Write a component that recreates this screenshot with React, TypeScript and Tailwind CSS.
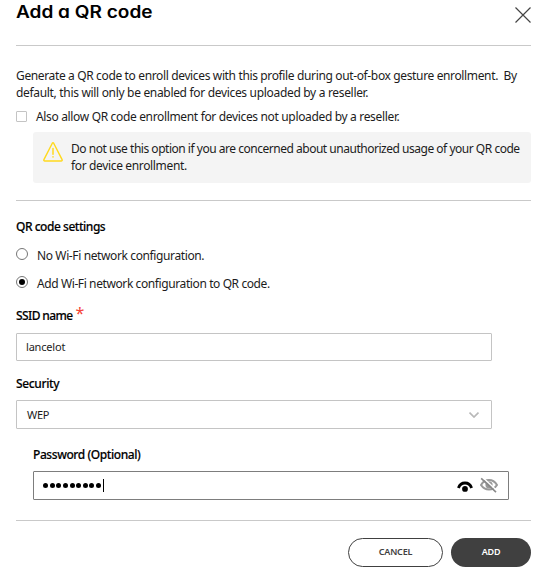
import type { ReactNode } from "react";

function Label({ children, className = "" }: { children: ReactNode; className?: string }) {
  return <div className={`whitespace-pre font-medium leading-[17px] text-black [-webkit-text-stroke:0.15px_black] ${className}`}>{children}</div>;
}

function Radio({ checked = false }: { checked?: boolean }) {
  return (
    <span className="mt-[-3px] flex size-3 shrink-0 items-center justify-center rounded-full border border-[#767676] bg-white">
      {checked && <span className="size-1.5 rounded-full bg-black" />}
    </span>
  );
}

function WarningIcon() {
  return (
    <svg className="h-5 w-5 shrink-0" viewBox="0 0 20 20" fill="none" stroke="#ffd91c" strokeLinejoin="round" strokeLinecap="round">
      <path d="M9.3 1.2Q10 .2 10.7 1.2L19.1 17.6Q19.5 19 18.1 19H1.9Q.5 19 .9 17.6Z" strokeWidth="1.4" />
      <path d="M10 6.5V12.2M10 14.8V15" strokeWidth="1.5" />
    </svg>
  );
}

export default function App() {
  return (
    <div className="flex h-[584px] w-[555px] flex-col overflow-hidden bg-white pl-4 pr-6 font-['Noto_Sans',sans-serif] text-[12px] tracking-[-0.35px] text-[#1c1c1c]">
      <header className="flex h-[46px] shrink-0 items-start justify-between border-b border-[#c9c9c9]">
        <h1 className="origin-left scale-x-[1.12] whitespace-pre pt-px font-['Inter',sans-serif] text-[17px] font-semibold leading-[22px] tracking-normal text-black [font-feature-settings:'cv11']">Add a QR code</h1>
        <svg className="mt-[7px] h-4 w-4" viewBox="0 0 16 16" stroke="#444" strokeWidth="1.2">
          <path d="M.5.5l15 15M15.5.5l-15 15" />
        </svg>
      </header>

      <section className="flex h-[155px] shrink-0 flex-col border-b border-[#c9c9c9] pt-[21px] leading-[17px]">
        <p className="whitespace-pre tracking-[-0.36px]">Generate a QR code to enroll devices with this profile during out-of-box gesture enrollment.  By</p>
        <p className="whitespace-pre tracking-[-0.32px]">default, this will only be enabled for devices uploaded by a reseller.</p>
        <div className="mt-[7px] flex items-center gap-[9px]">
          <span className="size-[11px] rounded-[1px] border border-[#c4c4c4]" />
          <span className="whitespace-pre tracking-[-0.34px]">Also allow QR code enrollment for devices not uploaded by a reseller.</span>
        </div>
        <div className="ml-[17px] mt-[7px] flex h-[51px] gap-2 rounded-[3px] bg-[#f4f4f4] pl-[10px] pt-[10px]">
          <WarningIcon />
          <div className="-mt-0.5">
            <p className="whitespace-pre tracking-[-0.48px]">Do not use this option if you are concerned about unauthorized usage of your QR code</p>
            <p className="whitespace-pre">for device enrollment.</p>
          </div>
        </div>
      </section>

      <section className="flex h-[320px] shrink-0 flex-col border-b border-[#c9c9c9] pt-[17px] leading-[17px]">
        <Label className="tracking-[-0.47px]">QR code settings</Label>
        <div className="mt-3 flex items-center gap-[9px]">
          <Radio />
          <span className="whitespace-pre tracking-[-0.38px]">No Wi-Fi network configuration.</span>
        </div>
        <div className="mt-[11px] flex items-center gap-[9px]">
          <Radio checked />
          <span className="whitespace-pre tracking-[-0.4px]">Add Wi-Fi network configuration to QR code.</span>
        </div>
        <Label className="mt-[15px] flex items-start gap-[3px] tracking-[-0.6px]">
          <span>SSID name</span>
          <span className="-mt-0.5 h-[17px] text-[16px] font-normal text-[#f44336] [-webkit-text-stroke:0]">*</span>
        </Label>
        <div className="mt-[9px] flex h-7 w-[476px] items-center rounded-[1px] border border-[#c4c4c4] pb-px pl-[9px] text-[11px] tracking-[-0.2px]">lancelot</div>
        <Label className="mt-[14px] tracking-[-0.35px]">Security</Label>
        <div className="mt-2 flex h-[29px] w-[476px] items-center justify-between rounded-[1px] border border-[#c4c4c4] pb-px pl-[10px] pr-[12px] text-[11px]">
          <span>WEP</span>
          <svg className="mt-px h-[6px] w-[10px]" viewBox="0 0 10 6" fill="none" stroke="#b8b8b8" strokeWidth="1.7"><path d="M.5.6L5 5L9.5.6" /></svg>
        </div>
        <div className="ml-[17px] mt-[17px] w-[476px]">
          <Label className="tracking-[-0.42px]">Password (Optional)</Label>
          <div className="mt-2 flex h-[29px] items-center rounded-[1px] border border-[#7d7d7d] pl-[9px] pr-[10px]">
            <div className="flex gap-[1.65px]">
              {Array.from({ length: 9 }, (_, i) => <span key={i} className="size-[5px] rounded-full bg-black" />)}
            </div>
            <span className="ml-[2px] h-[13px] w-px bg-black" />
            <svg className="ml-auto mt-px h-[11px] w-4" viewBox="0 0 16 11">
              <path d="M1.4 7Q3.2 2 8 2T14.6 7" fill="none" stroke="#000" strokeWidth="2.8" />
              <circle cx="8" cy="7.9" r="2.9" />
            </svg>
            <svg className="-mt-0.5 ml-[7px] h-4 w-[18px]" viewBox="0 0 18 16" fill="none">
              <path d="M1 8Q4 3 9 3T17 8Q14 12.5 9 12.5T1 8Z" stroke="#999" strokeWidth="2" />
              <circle cx="9" cy="7.8" r="3.6" fill="#999" />
              <path d="M2.5.3L17 13.7" stroke="#fff" strokeWidth="1.5" />
              <path d="M1.2 1.3L16 15.2" stroke="#888" strokeWidth="1.6" />
            </svg>
          </div>
        </div>
      </section>

      <footer className="flex justify-end gap-2 pt-[17px] text-[9px] font-semibold tracking-[-0.2px]">
        <button className="h-[29px] w-[95px] rounded-full border border-[#404040] pb-px text-[#404040]">CANCEL</button>
        <button className="h-[29px] w-20 rounded-full bg-[#404040] pb-px text-white">ADD</button>
      </footer>
    </div>
  );
}
